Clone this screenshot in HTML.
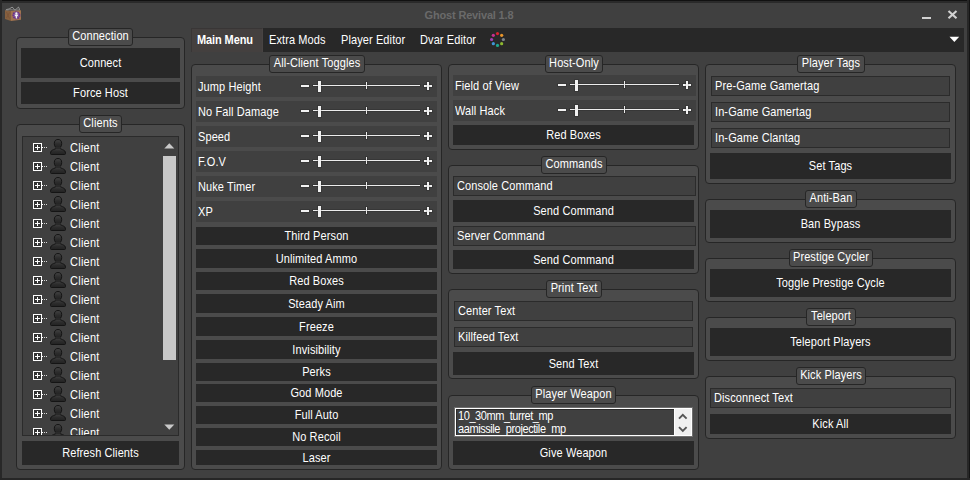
<!DOCTYPE html>
<html><head><meta charset="utf-8"><title>Ghost Revival 1.8</title>
<style>
html,body{margin:0;padding:0}
body{width:970px;height:480px;position:relative;overflow:hidden;background:#404040;font:11px "Liberation Sans",sans-serif;letter-spacing:.1px;color:#fff}
div,i,svg{position:absolute;box-sizing:border-box;display:block}
.g{border:1px solid #262626;border-radius:4px;background:#4b4b4b}
.gl{border:1px solid #262626;border-radius:3px;background:#4b4b4b;text-align:center;white-space:nowrap}
.b{background:#282828;text-align:center;white-space:nowrap}
.t{background:#404040;border:1px solid #2b2b2b;padding-left:3px;white-space:nowrap}
.r{background:#404040;padding-left:2px;white-space:nowrap}
.x{display:inline-block;transform:scaleY(1.09);transform-origin:50% 62%}
.w{background:#f2f2f2;box-shadow:0 0 0 1px rgba(0,0,0,.13)}
.tr{background:#ececec}
.tab{top:28px;height:24px;line-height:24px;white-space:nowrap}
.ti{left:0;width:140px;height:19px;line-height:19px}
.ti span{position:absolute;left:47px;top:0;letter-spacing:.25px}
</style></head><body>

<div style="left:0;top:0;width:970px;height:3px;background:#2a2a2a"></div>
<div style="left:0;top:0;width:970px;height:1px;background:#111"></div>
<div style="left:0;top:0;width:2px;height:480px;background:#282828"></div>
<div style="left:967px;top:0;width:3px;height:480px;background:#272727"></div>
<div style="left:969px;top:0;width:1px;height:480px;background:#141414"></div>
<div style="left:0;top:478px;width:970px;height:2px;background:#262626"></div>
<svg style="left:5px;top:6px" width="17" height="16" viewBox="0 0 17 16">
<path d="M0 4.300L6 4.700L6 15.100L0 13Z" fill="#85603f"/>
<path d="M6 4.700L16 4.300L16 13.700L6 15.100Z" fill="#a0734f"/>
<path d="M1.500 6L4.500 12.500M4.500 6.500L1.500 12" stroke="#7a5236" stroke-width=".8" fill="none"/>
<path d="M.8 4C2.500 2.800 3.800 3.600 5.200 2.400S7.600 .6 8.600 2.600S11 3.900 12.300 2.100S13.900 1.400 14.600 3.800" stroke="#c0c0c0" stroke-width=".7" fill="none"/>
<path d="M1.500 4.200C5 3.200 9 4.200 14.800 3.900" stroke="#8e8e8e" stroke-width=".8" fill="none"/>
<circle cx="11.400" cy="9.300" r="3.300" fill="#84559a" stroke="#66308e" stroke-width="1.500" stroke-dasharray="1.500 .8"/>
<circle cx="11.400" cy="7.300" r="1.150" fill="#f4f4f4"/>
<path d="M9.600 8.700Q11.400 7.700 13.200 8.700Q13.100 10.100 12 10.400L11.900 12.500L10.900 12.500L10.800 10.400Q9.700 10.100 9.600 8.700Z" fill="#f4f4f4"/>
</svg>
<div style="left:369px;top:3px;width:200px;height:25px;line-height:25px;text-align:center;font-weight:bold;font-size:11px;letter-spacing:-0.17px;color:#6a6a6a;white-space:nowrap">Ghost Revival 1.8</div>
<i style="left:922px;top:17px;width:9px;height:2px;background:#d2d2d2"></i>
<svg style="left:946px;top:9px" width="13" height="12" viewBox="0 0 13 12"><path d="M2.500 1.900L10.500 9.300M10.500 1.900L2.500 9.300" stroke="#d2d2d2" stroke-width="2.100" fill="none"/></svg>
<div style="left:191px;top:28px;width:773px;height:24px;background:#282828"></div>
<div style="left:191px;top:28px;width:72px;height:24px;background:#44403f;border-left:1px solid #393636;border-top:1px solid #393636;border-right:1px solid #484443"></div>
<div class="tab" style="left:197px;font-weight:bold;letter-spacing:-0.1px"><span class="x">Main Menu</span></div>
<div class="tab" style="left:269px"><span class="x">Extra Mods</span></div>
<div class="tab" style="left:341px"><span class="x">Player Editor</span></div>
<div class="tab" style="left:420px"><span class="x">Dvar Editor</span></div>
<svg style="left:489px;top:31px" width="17" height="17" viewBox="0 0 17 17"><circle cx="8.50" cy="2.60" r="1.6" fill="#d8232f"/><circle cx="12.67" cy="4.33" r="1.6" fill="#e8952a"/><circle cx="14.40" cy="8.50" r="1.6" fill="#7c848c"/><circle cx="12.67" cy="12.67" r="1.6" fill="#8db82f"/><circle cx="8.50" cy="14.40" r="1.6" fill="#1fa58c"/><circle cx="4.33" cy="12.67" r="1.6" fill="#3f95d8"/><circle cx="2.60" cy="8.50" r="1.6" fill="#a23fb4"/><circle cx="4.33" cy="4.33" r="1.6" fill="#c8308f"/></svg>
<svg style="left:949px;top:36px" width="11" height="7" viewBox="0 0 11 7"><path d="M0.5 0.8 L10.2 0.8 L5.35 6 Z" fill="#fff"/></svg>
<div class="g" style="left:16px;top:37px;width:169px;height:72px;"></div>
<div class="gl" style="left:68px;top:28px;width:65px;height:18px;line-height:14px;"><span class="x">Connection</span></div>
<div class="b" style="left:21px;top:48px;width:159px;height:30px;line-height:30px;"><span class="x">Connect</span></div>
<div class="b" style="left:21px;top:82px;width:159px;height:22px;line-height:22px;"><span class="x">Force Host</span></div>
<div class="g" style="left:16px;top:124px;width:169px;height:346px;"></div>
<div class="gl" style="left:79px;top:115px;width:43px;height:18px;line-height:14px;"><span class="x">Clients</span></div>
<svg width="0" height="0" style="left:0;top:0"><defs><linearGradient id="pg" x1="0" y1="0" x2="0" y2="1"><stop offset="0" stop-color="#444"/><stop offset=".55" stop-color="#2c2c2c"/><stop offset="1" stop-color="#222"/></linearGradient></defs></svg>
<div style="left:22px;top:136px;width:157px;height:300px;background:#404040;border:1px solid #2b2b2b;overflow:hidden">
<div class="ti" style="top:2px"><svg style="left:10px;top:4px" width="16" height="9" viewBox="0 0 16 9"><rect x="0.5" y="0.5" width="8" height="8" fill="#343434" stroke="#fff"/><path d="M2 4.5H7M4.5 2V7" stroke="#fff" stroke-width="1"/><path d="M9 4.5h1" stroke="#fff"/><path d="M11 4.5h1m1 0h1" stroke="#d8d8d8" stroke-width="1"/></svg><svg style="left:27px;top:0px" width="16" height="16" viewBox="0 0 16 16"><g fill="url(#pg)" stroke="#141414" stroke-width="1"><path d="M.5 14.500C.5 12 1.600 11.400 3.600 10.600L6 9.500Q6.500 9.200 6.300 8.500L9.700 8.500Q9.500 9.200 10 9.500L12.400 10.600C14.400 11.400 15.500 12 15.500 14.500Q15.500 15.500 14.500 15.500L1.500 15.500Q.5 15.500 .5 14.500Z"/><ellipse cx="8" cy="4.700" rx="3.700" ry="4.200"/></g><rect x="5.500" y="7.800" width="5" height="2.200" fill="#2a2a2a"/></svg><span class="x">Client</span></div>
<div class="ti" style="top:21px"><svg style="left:10px;top:4px" width="16" height="9" viewBox="0 0 16 9"><rect x="0.5" y="0.5" width="8" height="8" fill="#343434" stroke="#fff"/><path d="M2 4.5H7M4.5 2V7" stroke="#fff" stroke-width="1"/><path d="M9 4.5h1" stroke="#fff"/><path d="M11 4.5h1m1 0h1" stroke="#d8d8d8" stroke-width="1"/></svg><svg style="left:27px;top:0px" width="16" height="16" viewBox="0 0 16 16"><g fill="url(#pg)" stroke="#141414" stroke-width="1"><path d="M.5 14.500C.5 12 1.600 11.400 3.600 10.600L6 9.500Q6.500 9.200 6.300 8.500L9.700 8.500Q9.500 9.200 10 9.500L12.400 10.600C14.400 11.400 15.500 12 15.500 14.500Q15.500 15.500 14.500 15.500L1.500 15.500Q.5 15.500 .5 14.500Z"/><ellipse cx="8" cy="4.700" rx="3.700" ry="4.200"/></g><rect x="5.500" y="7.800" width="5" height="2.200" fill="#2a2a2a"/></svg><span class="x">Client</span></div>
<div class="ti" style="top:40px"><svg style="left:10px;top:4px" width="16" height="9" viewBox="0 0 16 9"><rect x="0.5" y="0.5" width="8" height="8" fill="#343434" stroke="#fff"/><path d="M2 4.5H7M4.5 2V7" stroke="#fff" stroke-width="1"/><path d="M9 4.5h1" stroke="#fff"/><path d="M11 4.5h1m1 0h1" stroke="#d8d8d8" stroke-width="1"/></svg><svg style="left:27px;top:0px" width="16" height="16" viewBox="0 0 16 16"><g fill="url(#pg)" stroke="#141414" stroke-width="1"><path d="M.5 14.500C.5 12 1.600 11.400 3.600 10.600L6 9.500Q6.500 9.200 6.300 8.500L9.700 8.500Q9.500 9.200 10 9.500L12.400 10.600C14.400 11.400 15.500 12 15.500 14.500Q15.500 15.500 14.500 15.500L1.500 15.500Q.5 15.500 .5 14.500Z"/><ellipse cx="8" cy="4.700" rx="3.700" ry="4.200"/></g><rect x="5.500" y="7.800" width="5" height="2.200" fill="#2a2a2a"/></svg><span class="x">Client</span></div>
<div class="ti" style="top:59px"><svg style="left:10px;top:4px" width="16" height="9" viewBox="0 0 16 9"><rect x="0.5" y="0.5" width="8" height="8" fill="#343434" stroke="#fff"/><path d="M2 4.5H7M4.5 2V7" stroke="#fff" stroke-width="1"/><path d="M9 4.5h1" stroke="#fff"/><path d="M11 4.5h1m1 0h1" stroke="#d8d8d8" stroke-width="1"/></svg><svg style="left:27px;top:0px" width="16" height="16" viewBox="0 0 16 16"><g fill="url(#pg)" stroke="#141414" stroke-width="1"><path d="M.5 14.500C.5 12 1.600 11.400 3.600 10.600L6 9.500Q6.500 9.200 6.300 8.500L9.700 8.500Q9.500 9.200 10 9.500L12.400 10.600C14.400 11.400 15.500 12 15.500 14.500Q15.500 15.500 14.500 15.500L1.500 15.500Q.5 15.500 .5 14.500Z"/><ellipse cx="8" cy="4.700" rx="3.700" ry="4.200"/></g><rect x="5.500" y="7.800" width="5" height="2.200" fill="#2a2a2a"/></svg><span class="x">Client</span></div>
<div class="ti" style="top:78px"><svg style="left:10px;top:4px" width="16" height="9" viewBox="0 0 16 9"><rect x="0.5" y="0.5" width="8" height="8" fill="#343434" stroke="#fff"/><path d="M2 4.5H7M4.5 2V7" stroke="#fff" stroke-width="1"/><path d="M9 4.5h1" stroke="#fff"/><path d="M11 4.5h1m1 0h1" stroke="#d8d8d8" stroke-width="1"/></svg><svg style="left:27px;top:0px" width="16" height="16" viewBox="0 0 16 16"><g fill="url(#pg)" stroke="#141414" stroke-width="1"><path d="M.5 14.500C.5 12 1.600 11.400 3.600 10.600L6 9.500Q6.500 9.200 6.300 8.500L9.700 8.500Q9.500 9.200 10 9.500L12.400 10.600C14.400 11.400 15.500 12 15.500 14.500Q15.500 15.500 14.500 15.500L1.500 15.500Q.5 15.500 .5 14.500Z"/><ellipse cx="8" cy="4.700" rx="3.700" ry="4.200"/></g><rect x="5.500" y="7.800" width="5" height="2.200" fill="#2a2a2a"/></svg><span class="x">Client</span></div>
<div class="ti" style="top:97px"><svg style="left:10px;top:4px" width="16" height="9" viewBox="0 0 16 9"><rect x="0.5" y="0.5" width="8" height="8" fill="#343434" stroke="#fff"/><path d="M2 4.5H7M4.5 2V7" stroke="#fff" stroke-width="1"/><path d="M9 4.5h1" stroke="#fff"/><path d="M11 4.5h1m1 0h1" stroke="#d8d8d8" stroke-width="1"/></svg><svg style="left:27px;top:0px" width="16" height="16" viewBox="0 0 16 16"><g fill="url(#pg)" stroke="#141414" stroke-width="1"><path d="M.5 14.500C.5 12 1.600 11.400 3.600 10.600L6 9.500Q6.500 9.200 6.300 8.500L9.700 8.500Q9.500 9.200 10 9.500L12.400 10.600C14.400 11.400 15.500 12 15.500 14.500Q15.500 15.500 14.500 15.500L1.500 15.500Q.5 15.500 .5 14.500Z"/><ellipse cx="8" cy="4.700" rx="3.700" ry="4.200"/></g><rect x="5.500" y="7.800" width="5" height="2.200" fill="#2a2a2a"/></svg><span class="x">Client</span></div>
<div class="ti" style="top:116px"><svg style="left:10px;top:4px" width="16" height="9" viewBox="0 0 16 9"><rect x="0.5" y="0.5" width="8" height="8" fill="#343434" stroke="#fff"/><path d="M2 4.5H7M4.5 2V7" stroke="#fff" stroke-width="1"/><path d="M9 4.5h1" stroke="#fff"/><path d="M11 4.5h1m1 0h1" stroke="#d8d8d8" stroke-width="1"/></svg><svg style="left:27px;top:0px" width="16" height="16" viewBox="0 0 16 16"><g fill="url(#pg)" stroke="#141414" stroke-width="1"><path d="M.5 14.500C.5 12 1.600 11.400 3.600 10.600L6 9.500Q6.500 9.200 6.300 8.500L9.700 8.500Q9.500 9.200 10 9.500L12.400 10.600C14.400 11.400 15.500 12 15.500 14.500Q15.500 15.500 14.500 15.500L1.500 15.500Q.5 15.500 .5 14.500Z"/><ellipse cx="8" cy="4.700" rx="3.700" ry="4.200"/></g><rect x="5.500" y="7.800" width="5" height="2.200" fill="#2a2a2a"/></svg><span class="x">Client</span></div>
<div class="ti" style="top:135px"><svg style="left:10px;top:4px" width="16" height="9" viewBox="0 0 16 9"><rect x="0.5" y="0.5" width="8" height="8" fill="#343434" stroke="#fff"/><path d="M2 4.5H7M4.5 2V7" stroke="#fff" stroke-width="1"/><path d="M9 4.5h1" stroke="#fff"/><path d="M11 4.5h1m1 0h1" stroke="#d8d8d8" stroke-width="1"/></svg><svg style="left:27px;top:0px" width="16" height="16" viewBox="0 0 16 16"><g fill="url(#pg)" stroke="#141414" stroke-width="1"><path d="M.5 14.500C.5 12 1.600 11.400 3.600 10.600L6 9.500Q6.500 9.200 6.300 8.500L9.700 8.500Q9.500 9.200 10 9.500L12.400 10.600C14.400 11.400 15.500 12 15.500 14.500Q15.500 15.500 14.500 15.500L1.500 15.500Q.5 15.500 .5 14.500Z"/><ellipse cx="8" cy="4.700" rx="3.700" ry="4.200"/></g><rect x="5.500" y="7.800" width="5" height="2.200" fill="#2a2a2a"/></svg><span class="x">Client</span></div>
<div class="ti" style="top:154px"><svg style="left:10px;top:4px" width="16" height="9" viewBox="0 0 16 9"><rect x="0.5" y="0.5" width="8" height="8" fill="#343434" stroke="#fff"/><path d="M2 4.5H7M4.5 2V7" stroke="#fff" stroke-width="1"/><path d="M9 4.5h1" stroke="#fff"/><path d="M11 4.5h1m1 0h1" stroke="#d8d8d8" stroke-width="1"/></svg><svg style="left:27px;top:0px" width="16" height="16" viewBox="0 0 16 16"><g fill="url(#pg)" stroke="#141414" stroke-width="1"><path d="M.5 14.500C.5 12 1.600 11.400 3.600 10.600L6 9.500Q6.500 9.200 6.300 8.500L9.700 8.500Q9.500 9.200 10 9.500L12.400 10.600C14.400 11.400 15.500 12 15.500 14.500Q15.500 15.500 14.500 15.500L1.500 15.500Q.5 15.500 .5 14.500Z"/><ellipse cx="8" cy="4.700" rx="3.700" ry="4.200"/></g><rect x="5.500" y="7.800" width="5" height="2.200" fill="#2a2a2a"/></svg><span class="x">Client</span></div>
<div class="ti" style="top:173px"><svg style="left:10px;top:4px" width="16" height="9" viewBox="0 0 16 9"><rect x="0.5" y="0.5" width="8" height="8" fill="#343434" stroke="#fff"/><path d="M2 4.5H7M4.5 2V7" stroke="#fff" stroke-width="1"/><path d="M9 4.5h1" stroke="#fff"/><path d="M11 4.5h1m1 0h1" stroke="#d8d8d8" stroke-width="1"/></svg><svg style="left:27px;top:0px" width="16" height="16" viewBox="0 0 16 16"><g fill="url(#pg)" stroke="#141414" stroke-width="1"><path d="M.5 14.500C.5 12 1.600 11.400 3.600 10.600L6 9.500Q6.500 9.200 6.300 8.500L9.700 8.500Q9.500 9.200 10 9.500L12.400 10.600C14.400 11.400 15.500 12 15.500 14.500Q15.500 15.500 14.500 15.500L1.500 15.500Q.5 15.500 .5 14.500Z"/><ellipse cx="8" cy="4.700" rx="3.700" ry="4.200"/></g><rect x="5.500" y="7.800" width="5" height="2.200" fill="#2a2a2a"/></svg><span class="x">Client</span></div>
<div class="ti" style="top:192px"><svg style="left:10px;top:4px" width="16" height="9" viewBox="0 0 16 9"><rect x="0.5" y="0.5" width="8" height="8" fill="#343434" stroke="#fff"/><path d="M2 4.5H7M4.5 2V7" stroke="#fff" stroke-width="1"/><path d="M9 4.5h1" stroke="#fff"/><path d="M11 4.5h1m1 0h1" stroke="#d8d8d8" stroke-width="1"/></svg><svg style="left:27px;top:0px" width="16" height="16" viewBox="0 0 16 16"><g fill="url(#pg)" stroke="#141414" stroke-width="1"><path d="M.5 14.500C.5 12 1.600 11.400 3.600 10.600L6 9.500Q6.500 9.200 6.300 8.500L9.700 8.500Q9.500 9.200 10 9.500L12.400 10.600C14.400 11.400 15.500 12 15.500 14.500Q15.500 15.500 14.500 15.500L1.500 15.500Q.5 15.500 .5 14.500Z"/><ellipse cx="8" cy="4.700" rx="3.700" ry="4.200"/></g><rect x="5.500" y="7.800" width="5" height="2.200" fill="#2a2a2a"/></svg><span class="x">Client</span></div>
<div class="ti" style="top:211px"><svg style="left:10px;top:4px" width="16" height="9" viewBox="0 0 16 9"><rect x="0.5" y="0.5" width="8" height="8" fill="#343434" stroke="#fff"/><path d="M2 4.5H7M4.5 2V7" stroke="#fff" stroke-width="1"/><path d="M9 4.5h1" stroke="#fff"/><path d="M11 4.5h1m1 0h1" stroke="#d8d8d8" stroke-width="1"/></svg><svg style="left:27px;top:0px" width="16" height="16" viewBox="0 0 16 16"><g fill="url(#pg)" stroke="#141414" stroke-width="1"><path d="M.5 14.500C.5 12 1.600 11.400 3.600 10.600L6 9.500Q6.500 9.200 6.300 8.500L9.700 8.500Q9.500 9.200 10 9.500L12.400 10.600C14.400 11.400 15.500 12 15.500 14.500Q15.500 15.500 14.500 15.500L1.500 15.500Q.5 15.500 .5 14.500Z"/><ellipse cx="8" cy="4.700" rx="3.700" ry="4.200"/></g><rect x="5.500" y="7.800" width="5" height="2.200" fill="#2a2a2a"/></svg><span class="x">Client</span></div>
<div class="ti" style="top:230px"><svg style="left:10px;top:4px" width="16" height="9" viewBox="0 0 16 9"><rect x="0.5" y="0.5" width="8" height="8" fill="#343434" stroke="#fff"/><path d="M2 4.5H7M4.5 2V7" stroke="#fff" stroke-width="1"/><path d="M9 4.5h1" stroke="#fff"/><path d="M11 4.5h1m1 0h1" stroke="#d8d8d8" stroke-width="1"/></svg><svg style="left:27px;top:0px" width="16" height="16" viewBox="0 0 16 16"><g fill="url(#pg)" stroke="#141414" stroke-width="1"><path d="M.5 14.500C.5 12 1.600 11.400 3.600 10.600L6 9.500Q6.500 9.200 6.300 8.500L9.700 8.500Q9.500 9.200 10 9.500L12.400 10.600C14.400 11.400 15.500 12 15.500 14.500Q15.500 15.500 14.500 15.500L1.500 15.500Q.5 15.500 .5 14.500Z"/><ellipse cx="8" cy="4.700" rx="3.700" ry="4.200"/></g><rect x="5.500" y="7.800" width="5" height="2.200" fill="#2a2a2a"/></svg><span class="x">Client</span></div>
<div class="ti" style="top:249px"><svg style="left:10px;top:4px" width="16" height="9" viewBox="0 0 16 9"><rect x="0.5" y="0.5" width="8" height="8" fill="#343434" stroke="#fff"/><path d="M2 4.5H7M4.5 2V7" stroke="#fff" stroke-width="1"/><path d="M9 4.5h1" stroke="#fff"/><path d="M11 4.5h1m1 0h1" stroke="#d8d8d8" stroke-width="1"/></svg><svg style="left:27px;top:0px" width="16" height="16" viewBox="0 0 16 16"><g fill="url(#pg)" stroke="#141414" stroke-width="1"><path d="M.5 14.500C.5 12 1.600 11.400 3.600 10.600L6 9.500Q6.500 9.200 6.300 8.500L9.700 8.500Q9.500 9.200 10 9.500L12.400 10.600C14.400 11.400 15.500 12 15.500 14.500Q15.500 15.500 14.500 15.500L1.500 15.500Q.5 15.500 .5 14.500Z"/><ellipse cx="8" cy="4.700" rx="3.700" ry="4.200"/></g><rect x="5.500" y="7.800" width="5" height="2.200" fill="#2a2a2a"/></svg><span class="x">Client</span></div>
<div class="ti" style="top:268px"><svg style="left:10px;top:4px" width="16" height="9" viewBox="0 0 16 9"><rect x="0.5" y="0.5" width="8" height="8" fill="#343434" stroke="#fff"/><path d="M2 4.5H7M4.5 2V7" stroke="#fff" stroke-width="1"/><path d="M9 4.5h1" stroke="#fff"/><path d="M11 4.5h1m1 0h1" stroke="#d8d8d8" stroke-width="1"/></svg><svg style="left:27px;top:0px" width="16" height="16" viewBox="0 0 16 16"><g fill="url(#pg)" stroke="#141414" stroke-width="1"><path d="M.5 14.500C.5 12 1.600 11.400 3.600 10.600L6 9.500Q6.500 9.200 6.300 8.500L9.700 8.500Q9.500 9.200 10 9.500L12.400 10.600C14.400 11.400 15.500 12 15.500 14.500Q15.500 15.500 14.500 15.500L1.500 15.500Q.5 15.500 .5 14.500Z"/><ellipse cx="8" cy="4.700" rx="3.700" ry="4.200"/></g><rect x="5.500" y="7.800" width="5" height="2.200" fill="#2a2a2a"/></svg><span class="x">Client</span></div>
<div class="ti" style="top:287px"><svg style="left:10px;top:4px" width="16" height="9" viewBox="0 0 16 9"><rect x="0.5" y="0.5" width="8" height="8" fill="#343434" stroke="#fff"/><path d="M2 4.5H7M4.5 2V7" stroke="#fff" stroke-width="1"/><path d="M9 4.5h1" stroke="#fff"/><path d="M11 4.5h1m1 0h1" stroke="#d8d8d8" stroke-width="1"/></svg><svg style="left:27px;top:0px" width="16" height="16" viewBox="0 0 16 16"><g fill="url(#pg)" stroke="#141414" stroke-width="1"><path d="M.5 14.500C.5 12 1.600 11.400 3.600 10.600L6 9.500Q6.500 9.200 6.300 8.500L9.700 8.500Q9.500 9.200 10 9.500L12.400 10.600C14.400 11.400 15.500 12 15.500 14.500Q15.500 15.500 14.500 15.500L1.500 15.500Q.5 15.500 .5 14.500Z"/><ellipse cx="8" cy="4.700" rx="3.700" ry="4.200"/></g><rect x="5.500" y="7.800" width="5" height="2.200" fill="#2a2a2a"/></svg><span class="x">Client</span></div>
<svg style="left:141px;top:6px" width="11" height="6" viewBox="0 0 11 6"><path d="M0.3 5.6L5.3 0.3L10.3 5.6Z" fill="#c9c9c9"/></svg>
<i style="left:140px;top:19px;width:13px;height:204px;background:#c8c8c8"></i>
<svg style="left:141px;top:287px" width="11" height="6" viewBox="0 0 11 6"><path d="M0.3 0.4L10.3 0.4L5.3 5.7Z" fill="#c9c9c9"/></svg>
</div>
<div class="b" style="left:22px;top:441px;width:157px;height:24px;line-height:24px;"><span class="x">Refresh Clients</span></div>
<div class="g" style="left:191px;top:64px;width:251px;height:406px;"></div>
<div class="gl" style="left:269px;top:55px;width:96px;height:18px;line-height:14px;"><span class="x">All-Client Toggles</span></div>
<div class="r" style="left:196px;top:76px;width:241px;height:21px;line-height:22px;"><span class="x">Jump Height</span></div>
<i class="w" style="left:301px;top:85px;width:8px;height:2px"></i>
<i class="w tr" style="left:313px;top:85px;width:107px;height:1px"></i>
<i class="w tr" style="left:366px;top:82px;width:1px;height:7px"></i>
<i class="w" style="left:318px;top:81px;width:3px;height:11px"></i>
<i class="w" style="left:424px;top:85px;width:8px;height:2px"></i>
<i class="w" style="left:427px;top:82px;width:2px;height:8px"></i>
<div class="r" style="left:196px;top:101px;width:241px;height:21px;line-height:22px;"><span class="x">No Fall Damage</span></div>
<i class="w" style="left:301px;top:110px;width:8px;height:2px"></i>
<i class="w tr" style="left:313px;top:110px;width:107px;height:1px"></i>
<i class="w tr" style="left:366px;top:107px;width:1px;height:7px"></i>
<i class="w" style="left:318px;top:106px;width:3px;height:11px"></i>
<i class="w" style="left:424px;top:110px;width:8px;height:2px"></i>
<i class="w" style="left:427px;top:107px;width:2px;height:8px"></i>
<div class="r" style="left:196px;top:126px;width:241px;height:21px;line-height:22px;"><span class="x">Speed</span></div>
<i class="w" style="left:301px;top:135px;width:8px;height:2px"></i>
<i class="w tr" style="left:313px;top:135px;width:107px;height:1px"></i>
<i class="w tr" style="left:366px;top:132px;width:1px;height:7px"></i>
<i class="w" style="left:318px;top:131px;width:3px;height:11px"></i>
<i class="w" style="left:424px;top:135px;width:8px;height:2px"></i>
<i class="w" style="left:427px;top:132px;width:2px;height:8px"></i>
<div class="r" style="left:196px;top:151px;width:241px;height:21px;line-height:22px;"><span class="x">F.O.V</span></div>
<i class="w" style="left:301px;top:160px;width:8px;height:2px"></i>
<i class="w tr" style="left:313px;top:160px;width:107px;height:1px"></i>
<i class="w tr" style="left:366px;top:157px;width:1px;height:7px"></i>
<i class="w" style="left:318px;top:156px;width:3px;height:11px"></i>
<i class="w" style="left:424px;top:160px;width:8px;height:2px"></i>
<i class="w" style="left:427px;top:157px;width:2px;height:8px"></i>
<div class="r" style="left:196px;top:176px;width:241px;height:21px;line-height:22px;"><span class="x">Nuke Timer</span></div>
<i class="w" style="left:301px;top:185px;width:8px;height:2px"></i>
<i class="w tr" style="left:313px;top:185px;width:107px;height:1px"></i>
<i class="w tr" style="left:366px;top:182px;width:1px;height:7px"></i>
<i class="w" style="left:318px;top:181px;width:3px;height:11px"></i>
<i class="w" style="left:424px;top:185px;width:8px;height:2px"></i>
<i class="w" style="left:427px;top:182px;width:2px;height:8px"></i>
<div class="r" style="left:196px;top:201px;width:241px;height:21px;line-height:22px;"><span class="x">XP</span></div>
<i class="w" style="left:301px;top:210px;width:8px;height:2px"></i>
<i class="w tr" style="left:313px;top:210px;width:107px;height:1px"></i>
<i class="w tr" style="left:366px;top:207px;width:1px;height:7px"></i>
<i class="w" style="left:318px;top:206px;width:3px;height:11px"></i>
<i class="w" style="left:424px;top:210px;width:8px;height:2px"></i>
<i class="w" style="left:427px;top:207px;width:2px;height:8px"></i>
<div class="b" style="left:196px;top:227px;width:241px;height:18px;line-height:18px;"><span class="x">Third Person</span></div>
<div class="b" style="left:196px;top:249px;width:241px;height:19px;line-height:20px;"><span class="x">Unlimited Ammo</span></div>
<div class="b" style="left:196px;top:272px;width:241px;height:18px;line-height:18px;"><span class="x">Red Boxes</span></div>
<div class="b" style="left:196px;top:294px;width:241px;height:19px;line-height:20px;"><span class="x">Steady Aim</span></div>
<div class="b" style="left:196px;top:317px;width:241px;height:19px;line-height:20px;"><span class="x">Freeze</span></div>
<div class="b" style="left:196px;top:340px;width:241px;height:19px;line-height:20px;"><span class="x">Invisibility</span></div>
<div class="b" style="left:196px;top:363px;width:241px;height:18px;line-height:18px;"><span class="x">Perks</span></div>
<div class="b" style="left:196px;top:384px;width:241px;height:18px;line-height:18px;"><span class="x">God Mode</span></div>
<div class="b" style="left:196px;top:406px;width:241px;height:18px;line-height:18px;"><span class="x">Full Auto</span></div>
<div class="b" style="left:196px;top:428px;width:241px;height:18px;line-height:18px;"><span class="x">No Recoil</span></div>
<div class="b" style="left:196px;top:450px;width:241px;height:15px;line-height:16px;"><span class="x">Laser</span></div>
<div class="g" style="left:448px;top:64px;width:251px;height:86px;"></div>
<div class="gl" style="left:545px;top:55px;width:58px;height:18px;line-height:14px;"><span class="x">Host-Only</span></div>
<div class="r" style="left:453px;top:75px;width:243px;height:21px;line-height:22px;"><span class="x">Field of View</span></div>
<i class="w" style="left:558px;top:84px;width:8px;height:2px"></i>
<i class="w tr" style="left:570px;top:84px;width:109px;height:1px"></i>
<i class="w tr" style="left:624px;top:81px;width:1px;height:7px"></i>
<i class="w" style="left:575px;top:80px;width:3px;height:11px"></i>
<i class="w" style="left:683px;top:84px;width:8px;height:2px"></i>
<i class="w" style="left:686px;top:81px;width:2px;height:8px"></i>
<div class="r" style="left:453px;top:100px;width:243px;height:21px;line-height:22px;"><span class="x">Wall Hack</span></div>
<i class="w" style="left:558px;top:109px;width:8px;height:2px"></i>
<i class="w tr" style="left:570px;top:109px;width:109px;height:1px"></i>
<i class="w tr" style="left:624px;top:106px;width:1px;height:7px"></i>
<i class="w" style="left:575px;top:105px;width:3px;height:11px"></i>
<i class="w" style="left:683px;top:109px;width:8px;height:2px"></i>
<i class="w" style="left:686px;top:106px;width:2px;height:8px"></i>
<div class="b" style="left:453px;top:125px;width:241px;height:20px;line-height:20px;"><span class="x">Red Boxes</span></div>
<div class="g" style="left:448px;top:165px;width:251px;height:109px;"></div>
<div class="gl" style="left:541px;top:156px;width:66px;height:18px;line-height:14px;"><span class="x">Commands</span></div>
<div class="t" style="left:453px;top:176px;width:243px;height:20px;line-height:18px;"><span class="x">Console Command</span></div>
<div class="b" style="left:453px;top:200px;width:241px;height:22px;line-height:22px;"><span class="x">Send Command</span></div>
<div class="t" style="left:453px;top:226px;width:243px;height:20px;line-height:18px;"><span class="x">Server Command</span></div>
<div class="b" style="left:453px;top:250px;width:241px;height:19px;line-height:20px;"><span class="x">Send Command</span></div>
<div class="g" style="left:448px;top:289px;width:251px;height:90px;"></div>
<div class="gl" style="left:546px;top:280px;width:56px;height:18px;line-height:14px;"><span class="x">Print Text</span></div>
<div class="t" style="left:454px;top:301px;width:239px;height:20px;line-height:18px;"><span class="x">Center Text</span></div>
<div class="t" style="left:454px;top:327px;width:239px;height:20px;line-height:18px;"><span class="x">Killfeed Text</span></div>
<div class="b" style="left:453px;top:352px;width:241px;height:23px;line-height:24px;"><span class="x">Send Text</span></div>
<div class="g" style="left:448px;top:395px;width:251px;height:75px;"></div>
<div class="gl" style="left:531px;top:386px;width:85px;height:18px;line-height:14px;"><span class="x">Player Weapon</span></div>
<div style="left:454px;top:407px;width:239px;height:30px;border:1px solid #6e6e6e;background:#fff"><div style="left:1px;top:1px;width:218px;height:26px;background:#404040;border-left:1px solid #2c2c2c;border-top:1px solid #2c2c2c;overflow:hidden"><div style="left:1px;top:-1px;line-height:12.2px;white-space:nowrap"><span class="x" style="letter-spacing:-0.42px;transform-origin:50% 0">10_30mm_turret_mp<br>aamissile_projectile_mp<br>ac130_105mm_mp</span></div></div><div style="left:220px;top:1px;width:16px;height:26px;background:#f0f0f0"></div><svg style="left:223px;top:4px" width="10" height="22" viewBox="0 0 10 22"><path d="M1 6.700L4.800 2.900L8.600 6.700M1 15.100L4.800 18.900L8.600 15.100" stroke="#555" stroke-width="1.900" fill="none"/></svg></div>
<div class="b" style="left:453px;top:441px;width:241px;height:24px;line-height:24px;"><span class="x">Give Weapon</span></div>
<div class="g" style="left:705px;top:64px;width:251px;height:120px;"></div>
<div class="gl" style="left:797px;top:55px;width:68px;height:18px;line-height:14px;"><span class="x">Player Tags</span></div>
<div class="t" style="left:711px;top:76px;width:239px;height:20px;line-height:18px;"><span class="x">Pre-Game Gamertag</span></div>
<div class="t" style="left:711px;top:102px;width:239px;height:20px;line-height:18px;"><span class="x">In-Game Gamertag</span></div>
<div class="t" style="left:711px;top:128px;width:239px;height:20px;line-height:18px;"><span class="x">In-Game Clantag</span></div>
<div class="b" style="left:710px;top:153px;width:241px;height:26px;line-height:26px;"><span class="x">Set Tags</span></div>
<div class="g" style="left:705px;top:199px;width:251px;height:44px;"></div>
<div class="gl" style="left:805px;top:190px;width:52px;height:18px;line-height:14px;"><span class="x">Anti-Ban</span></div>
<div class="b" style="left:710px;top:210px;width:241px;height:28px;line-height:28px;"><span class="x">Ban Bypass</span></div>
<div class="g" style="left:705px;top:258px;width:251px;height:44px;"></div>
<div class="gl" style="left:789px;top:249px;width:84px;height:18px;line-height:14px;"><span class="x">Prestige Cycler</span></div>
<div class="b" style="left:710px;top:269px;width:241px;height:28px;line-height:28px;"><span class="x">Toggle Prestige Cycle</span></div>
<div class="g" style="left:705px;top:317px;width:251px;height:44px;"></div>
<div class="gl" style="left:806px;top:308px;width:50px;height:18px;line-height:14px;"><span class="x">Teleport</span></div>
<div class="b" style="left:710px;top:328px;width:241px;height:28px;line-height:28px;"><span class="x">Teleport Players</span></div>
<div class="g" style="left:705px;top:376px;width:251px;height:63px;"></div>
<div class="gl" style="left:796px;top:367px;width:70px;height:18px;line-height:14px;"><span class="x">Kick Players</span></div>
<div class="t" style="left:710px;top:388px;width:241px;height:20px;line-height:18px;"><span class="x">Disconnect Text</span></div>
<div class="b" style="left:710px;top:414px;width:241px;height:20px;line-height:20px;"><span class="x">Kick All</span></div>
</body></html>
